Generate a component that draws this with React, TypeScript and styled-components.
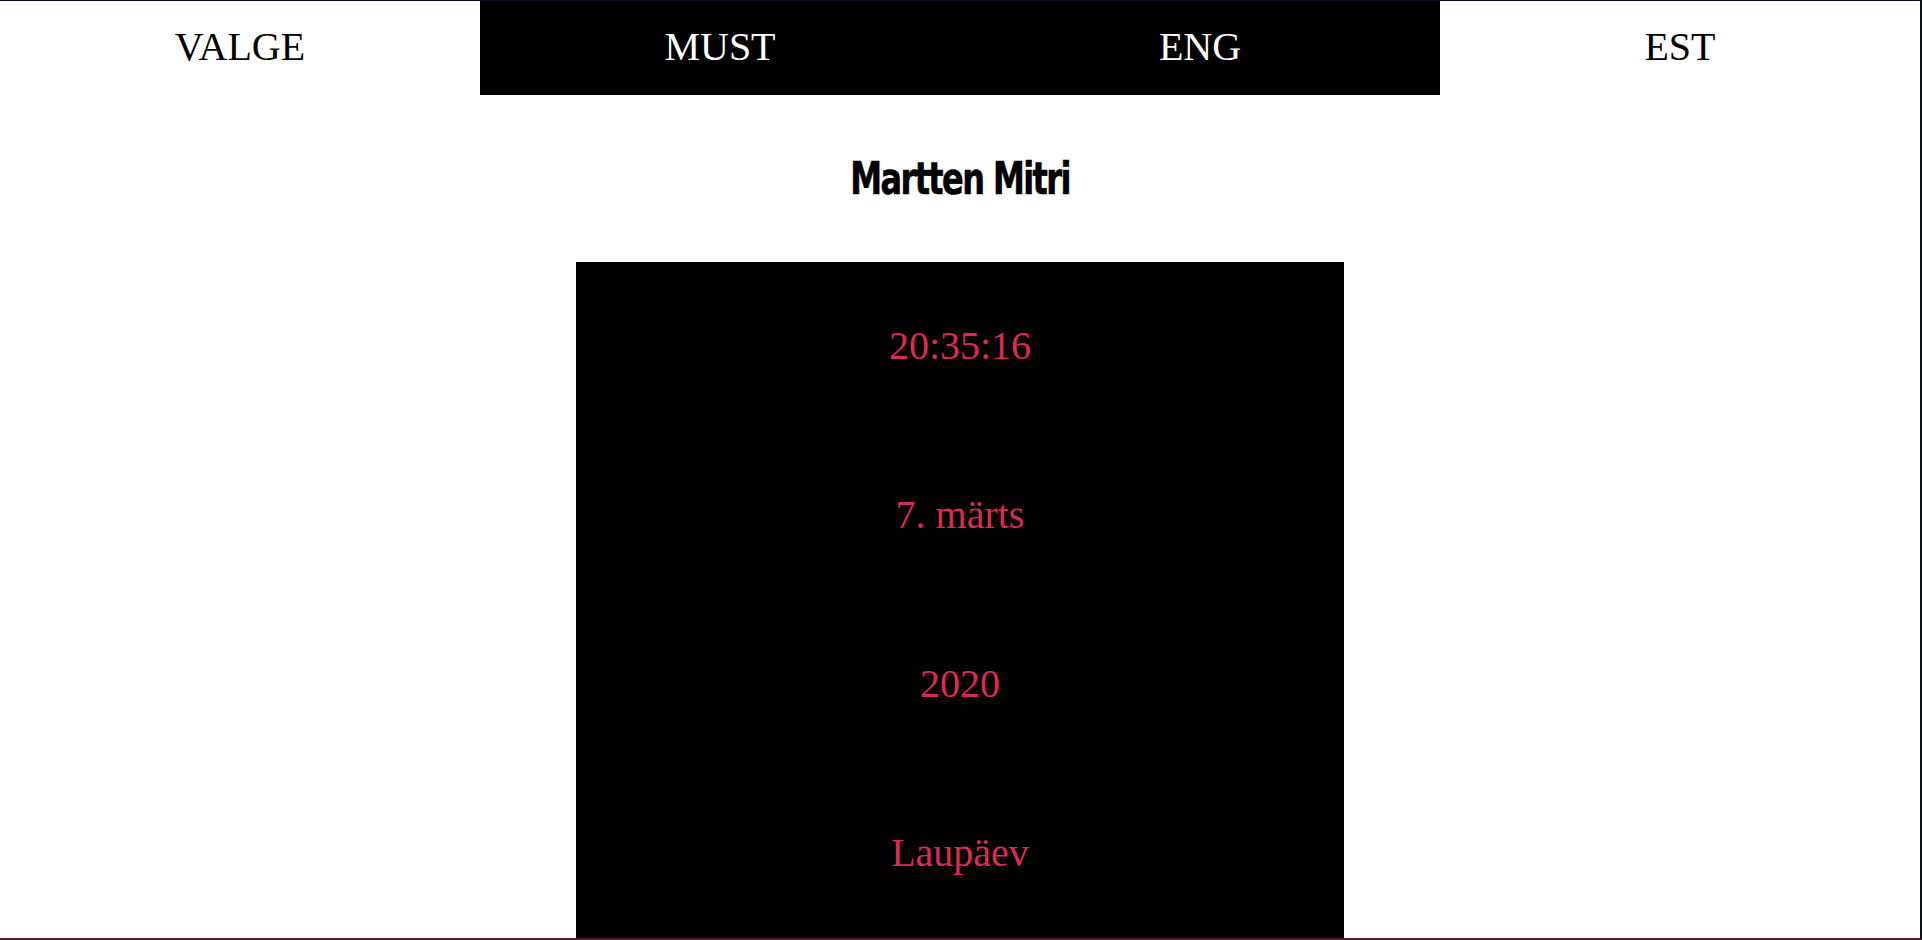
import React from "react";
import styled, { createGlobalStyle } from "styled-components";

const GlobalStyle = createGlobalStyle`
  html, body {
    margin: 0;
    padding: 0;
    background: #ffffff;
    overflow: hidden;
  }
  * { box-sizing: border-box; }
`;

const Frame = styled.div`
  height: 940px;
  overflow: hidden;
  border-top: 1px solid #0b0b2e;
  border-right: 2px solid #111118;
  border-bottom: 2px solid #5a1832;
  display: flex;
  flex-direction: column;
  background: #ffffff;
`;

const Nav = styled.nav`
  display: grid;
  grid-template-columns: repeat(4, 1fr);
  height: 94px;
  flex-shrink: 0;
`;

const NavButton = styled.button<{ $dark?: boolean }>`
  border: none;
  margin: 0;
  padding: 0 0 4px 0;
  background: ${(p) => (p.$dark ? "#000000" : "#ffffff")};
  color: ${(p) => (p.$dark ? "#ffffff" : "#000000")};
  font-family: "Liberation Serif", "Times New Roman", serif;
  font-size: 40px;
  cursor: pointer;
  display: flex;
  align-items: center;
  justify-content: center;
`;

const Name = styled.h1`
  margin: 59px 0 58px 0;
  text-align: center;
  font-family: Impact, "DejaVu Sans", sans-serif;
  font-stretch: condensed;
  font-weight: 700;
  font-size: 45px;
  line-height: 50px;
  color: #000000;
  letter-spacing: -2px;
  -webkit-text-stroke: 0.6px #000;
`;

const NameText = styled.span`
  display: inline-block;
  transform: scaleX(0.79);
`;

const ClockBox = styled.section`
  width: 40%;
  margin: 0 auto;
  flex: 1;
  background: #000000;
  padding-top: 62px;
  display: flex;
  flex-direction: column;
  align-items: center;
  gap: 125px;
`;

const ClockLine = styled.p`
  margin: 0;
  font-family: "Liberation Serif", "Times New Roman", serif;
  font-size: 40px;
  line-height: 44px;
  color: #dc2a55;
  text-align: center;
`;

export default function App() {
  return (
    <>
      <GlobalStyle />
      <Frame>
        <Nav>
          <NavButton>VALGE</NavButton>
          <NavButton $dark>MUST</NavButton>
          <NavButton $dark>ENG</NavButton>
          <NavButton>EST</NavButton>
        </Nav>
        <Name>
          <NameText>Martten Mitri</NameText>
        </Name>
        <ClockBox>
          <ClockLine>20:35:16</ClockLine>
          <ClockLine>7. märts</ClockLine>
          <ClockLine>2020</ClockLine>
          <ClockLine>Laupäev</ClockLine>
        </ClockBox>
      </Frame>
    </>
  );
}
